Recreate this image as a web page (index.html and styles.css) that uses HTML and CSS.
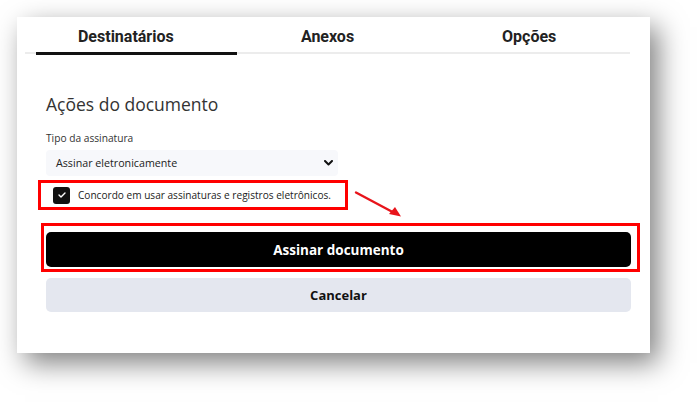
FILE: index.html
```html
<!DOCTYPE html>
<html lang="pt-BR">
<head>
    <meta charset="UTF-8">
    <meta name="viewport" content="width=device-width, initial-scale=1.0">
    <title>Ações do documento</title>
    <link rel="stylesheet" href="styles.css">
</head>
<body>
    <div class="card">
        <div class="tabs">
            <div class="tab active">Destinatários</div>
            <div class="tab">Anexos</div>
            <div class="tab">Opções</div>
            <span class="tab-indicator"></span>
        </div>

        <div class="content">
            <h2>Ações do documento</h2>

            <label class="field-label">Tipo da assinatura</label>
            <div class="select">
                <span>Assinar eletronicamente</span>
                <svg width="9" height="6" viewBox="0 0 9 6">
                    <path d="M1 1 L4.5 4.5 L8 1" fill="none" stroke="#111" stroke-width="2" stroke-linecap="round" stroke-linejoin="round"/>
                </svg>
            </div>

            <div class="highlight agree">
                <span class="checkbox">
                    <svg width="8" height="6" viewBox="0 0 8 6">
                        <path d="M1 3 L3 5 L7 1" fill="none" stroke="#fff" stroke-width="1.4" stroke-linecap="round" stroke-linejoin="round"/>
                    </svg>
                </span>
                <span>Concordo em usar assinaturas e registros eletrônicos.</span>
            </div>

            <div class="highlight action">
                <button class="btn btn-primary">Assinar documento</button>
            </div>
            <button class="btn btn-secondary">Cancelar</button>
        </div>

        <!-- annotation arrow -->
        <svg class="arrow" width="60" height="40" viewBox="0 0 60 40">
            <line x1="6" y1="4.5" x2="44" y2="24.8" stroke="#e8141b" stroke-width="2.4" stroke-linecap="round"/>
            <polygon points="51,28.5 39,26 45,19" fill="#e8141b"/>
        </svg>
    </div>
</body>
</html>
```

FILE: styles.css
```css
body {
    box-sizing: border-box;
    min-height: 100vh;
    margin: 0;
    padding: 17px 0 0 17px;
    background-color: #fff;
    font-family: "Open Sans", "Noto Sans", sans-serif;
    color: #222;
}

.card {
    position: relative;
    width: 633px;
    padding-bottom: 41px;
    background-color: #fff;
    box-shadow: 8px 10px 26px rgba(0, 0, 0, 0.5);
}

.tabs {
    position: relative;
    display: flex;
    margin: 0 20px 0 8px;
    border-bottom: 2px solid #ececec;
}

.tab {
    flex: 1;
    text-align: center;
    padding: 11px 0 6px;
    font-family: Roboto, "Liberation Sans", sans-serif;
    font-weight: 700;
    font-size: 16px;
    line-height: 18px;
    color: #222;
}

.tab-indicator {
    position: absolute;
    left: 11px;
    top: 35px;
    width: 201px;
    height: 3px;
    background-color: #111;
}

.content {
    padding: 38px 19px 0 29px;
}

h2 {
    margin: 0 0 15px;
    font-size: 17.5px;
    line-height: 24px;
    font-weight: 400;
    color: #333;
}

.field-label {
    display: block;
    margin-bottom: 5px;
    font-size: 10.2px;
    line-height: 14px;
    color: #333;
}

.select {
    display: flex;
    align-items: center;
    justify-content: space-between;
    box-sizing: border-box;
    width: 292px;
    height: 26px;
    padding: 0 5px 0 10px;
    background-color: #f7f8fb;
    border-radius: 4px;
    font-size: 10.7px;
    color: #222;
}

.highlight {
    box-sizing: border-box;
    border: 3px solid #ff0000;
}

.agree {
    display: flex;
    align-items: center;
    gap: 8px;
    width: 310px;
    height: 30px;
    margin: 4px 0 0 -8px;
    padding-left: 12px;
    font-size: 10.1px;
    color: #222;
}

.checkbox {
    display: flex;
    align-items: center;
    justify-content: center;
    width: 17px;
    height: 17px;
    background-color: #111;
    border-radius: 3px;
}

.action {
    width: 599px;
    margin: 13px 0 0 -5px;
    padding: 6px 6px 2px 2px;
}

.btn {
    display: block;
    width: 100%;
    border: none;
    border-radius: 5px;
    font-family: "Open Sans", sans-serif;
    font-weight: 700;
    font-size: 13px;
    cursor: pointer;
}

.btn-primary {
    height: 35px;
    background-color: #000;
    color: #fff;
    font-size: 13.5px;
}

.btn-secondary {
    height: 34px;
    margin-top: 6px;
    background-color: #e4e7ef;
    color: #111;
}

.arrow {
    position: absolute;
    left: 333px;
    top: 171px;
}
```
